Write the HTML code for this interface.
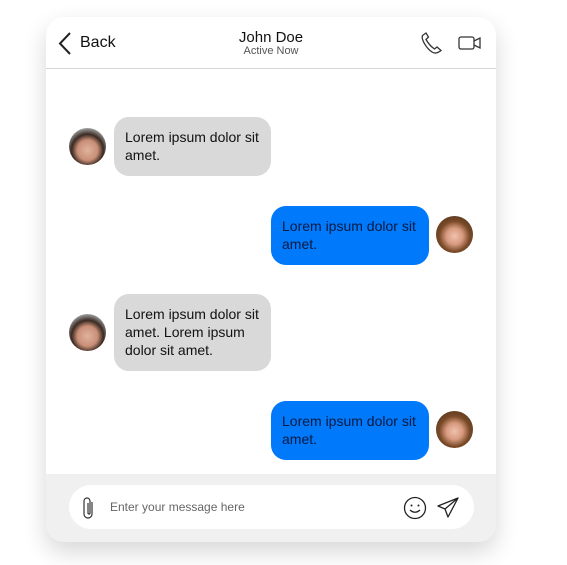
<!DOCTYPE html>
<html><head><style>
*{margin:0;padding:0;box-sizing:border-box}
body{width:567px;height:565px;background:#fff;font-family:"Liberation Sans",Arial,sans-serif;position:relative;overflow:hidden}
.card{position:absolute;left:46px;top:17px;width:450px;height:525px;background:#fff;border-radius:18px;box-shadow:0 10px 24px rgba(0,0,0,0.16);overflow:hidden}
.hdr{position:absolute;left:0;top:0;width:450px;height:52px;border-bottom:1px solid #d6d6d6}
.back{position:absolute;left:34px;top:17px;font-size:16px;color:#111}
.name{position:absolute;left:0;width:450px;text-align:center;top:12px;font-size:15px;color:#111}
.st{position:absolute;left:0;width:450px;text-align:center;top:28px;font-size:11px;color:#555}
.b{position:absolute;font-size:14px;line-height:18px;padding:11px 11px 12px;border-radius:15px;width:157px;color:#111}
.l{background:#d9d9d9;left:68px}
.r{background:#0079fb;left:225px;width:158px;color:#0a1a40}
.av{position:absolute;width:37px;height:37px;border-radius:50%}
.m{background:radial-gradient(circle at 50% 60%,#e0b29c 0,#c98f77 35%,#3a2a22 55%,#999 75%);left:23px}
.f{background:radial-gradient(circle at 50% 55%,#f0c1ad 0,#d79a7f 30%,#7a4a28 55%,#5a3a1f 80%);left:390px}
.ftr{position:absolute;left:0;top:457px;width:450px;height:68px;background:#f0f0f0}
.in{position:absolute;left:23px;top:11px;width:405px;height:44px;background:#fff;border-radius:22px}
.ph{position:absolute;left:41px;top:15px;font-size:12px;color:#666}
</style></head><body>
<div class="card">
<div class="hdr">
<svg style="position:absolute;left:12px;top:14px" width="14" height="25" viewBox="0 0 14 25"><path d="M12 2 L2 12.5 L12 23" fill="none" stroke="#222" stroke-width="2"/></svg>
<div class="back">Back</div>
<div class="name">John Doe</div>
<div class="st">Active Now</div>
<svg style="position:absolute;left:374px;top:14px" width="24" height="24" viewBox="0 0 24 24"><path d="M6 2 L2.5 4.5 C1 8 6 17 12 21 C15 23 18 22 21 19.5 L17 16 L14.5 18 C10 15 8 12 6 8.5 L8.5 6 Z" fill="none" stroke="#333" stroke-width="1.3"/></svg>
<svg style="position:absolute;left:412px;top:18px" width="24" height="16" viewBox="0 0 24 16"><rect x="1" y="2" width="15" height="12" rx="2" fill="none" stroke="#333" stroke-width="1.3"/><path d="M16 6 L22 3 V13 L16 10" fill="none" stroke="#333" stroke-width="1.3"/></svg>
</div>
<div class="av m" style="top:111px"></div>
<div class="b l" style="top:100px">Lorem ipsum dolor sit amet.</div>
<div class="b r" style="top:189px">Lorem ipsum dolor sit amet.</div>
<div class="av f" style="top:199px"></div>
<div class="av m" style="top:297px"></div>
<div class="b l" style="top:277px">Lorem ipsum dolor sit amet. Lorem ipsum dolor sit amet.</div>
<div class="b r" style="top:384px">Lorem ipsum dolor sit amet.</div>
<div class="av f" style="top:394px"></div>
<div class="ftr"><div class="in">
<svg style="position:absolute;left:13px;top:11px" width="14" height="24" viewBox="0 0 14 24"><path d="M10 6 V18 A4 4 0 0 1 2 18 V5 A3 3 0 0 1 8 5 V17 A1 1 0 0 1 6 17 V7" fill="none" stroke="#333" stroke-width="1.2"/></svg>
<div class="ph">Enter your message here</div>
<svg style="position:absolute;left:334px;top:11px" width="24" height="24" viewBox="0 0 24 24"><circle cx="12" cy="12" r="10.5" fill="none" stroke="#222" stroke-width="1.3"/><circle cx="8.5" cy="9.5" r="1" fill="#222"/><circle cx="15.5" cy="9.5" r="1" fill="#222"/><path d="M7 14 Q12 18.5 17 14" fill="none" stroke="#222" stroke-width="1.3"/></svg>
<svg style="position:absolute;left:367px;top:11px" width="24" height="24" viewBox="0 0 24 24"><path d="M22 2 L2 10 L9 13 L12 21 Z M22 2 L9 13" fill="none" stroke="#222" stroke-width="1.3" stroke-linejoin="round"/></svg>
</div></div>
</div>
</body></html>
